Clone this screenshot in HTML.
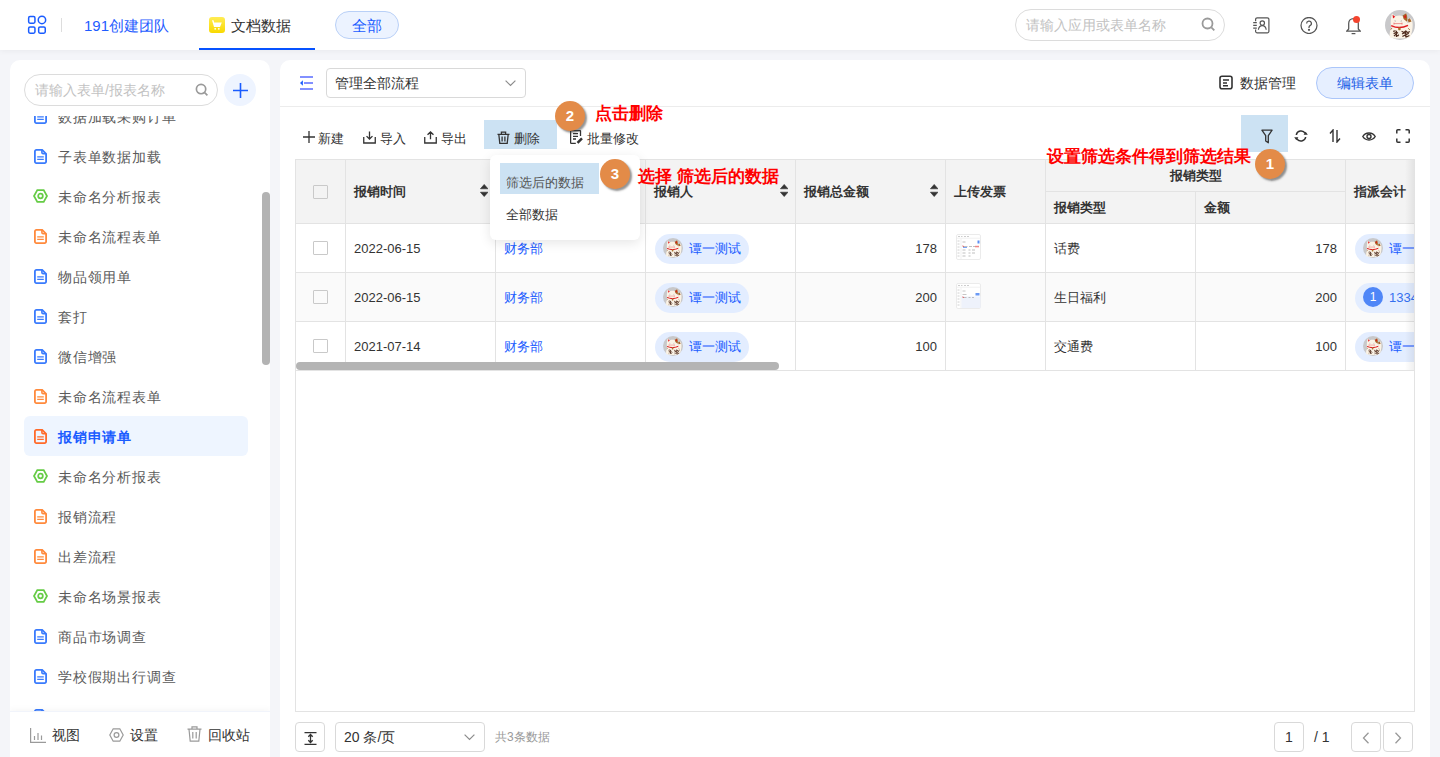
<!DOCTYPE html>
<html><head><meta charset="utf-8">
<style>
*{box-sizing:border-box;margin:0;padding:0}
html,body{width:1440px;height:757px;overflow:hidden}
body{position:relative;background:#f4f5f9;font-family:"Liberation Sans",sans-serif;color:#333;font-size:14px}
.a{position:absolute}
.t{position:absolute;white-space:nowrap;line-height:1}
svg{display:block;position:absolute}
/* header */
#hdr{position:absolute;left:0;top:0;width:1440px;height:50px;background:#fff;box-shadow:0 1px 6px rgba(0,0,0,.05)}
/* sidebar */
#side{position:absolute;left:10px;top:60px;width:260px;height:720px;background:#fff;border-radius:10px;overflow:hidden}
#main{position:absolute;left:280px;top:60px;width:1150px;height:720px;background:#fff;border-radius:10px}
.item{position:absolute;left:14px;width:224px;height:40px;border-radius:6px}
.item .t{left:34px;top:13.5px;font-size:14px;letter-spacing:.8px;color:#5a5a5a}
.item svg{left:9.5px;top:13px}
#list{position:absolute;left:0;top:56px;width:260px;height:596px;overflow:hidden}
.item.sel{background:#eef5ff}
.item.sel .t{color:#1a5cff;font-weight:bold}
.item .ih{left:8.5px;top:13px}
#sbot{position:absolute;left:0;top:651px;width:260px;height:60px;background:#fff;border-top:1px solid #f1f4fb;box-shadow:0 -2px 6px rgba(0,0,0,.035)}
.tb{top:132px;font-size:13px;color:#333}
.hl{height:1px;background:#e3e3e3}
.vl{width:1px;background:#e3e3e3}
.cb{width:14.5px;height:14px;border:1px solid #c9c9c9;border-radius:1px}
.th{font-size:13px;font-weight:bold;color:#333;margin-top:-1px}
.td{font-size:13px;color:#333}
.chip{height:30px;border-radius:15px;background:#e3edff}
.av{width:20px;height:20px;border-radius:50%;background:radial-gradient(circle at 50% 45%,#fff 0,#f5ece6 35%,#c9b6aa 60%,#bdbdbd 75%)}
.thumb{width:25px;height:26px;background:#f4f6fa;border:1px solid #eceef2}
.pbtn{width:30px;height:30px;border:1px solid #d9d9d9;border-radius:4px;background:#fff}
.num{width:30px;height:30px;border-radius:50%;background:#e38b48;color:#fff;font-size:15px;font-weight:bold;text-align:center;line-height:30px;box-shadow:2px 2px 2px rgba(60,60,60,.55)}
.ann{font-size:17px;font-weight:bold;color:#ff0000}
.avbig{width:30px;height:30px;border-radius:50%;background:radial-gradient(circle at 50% 45%,#fff 0,#f3e9e2 30%,#c7a995 55%,#bcbcbc 72%)}
</style></head><body>
<svg width="0" height="0" style="position:absolute">
<defs>
<symbol id="doc" viewBox="0 0 13 15"><g fill="none" stroke="currentColor"><path d="M2.4 0.9h5.8l3.9 3.9v7.8a1.5 1.5 0 0 1-1.5 1.5H2.4a1.5 1.5 0 0 1-1.5-1.5V2.4a1.5 1.5 0 0 1 1.5-1.5z" stroke-width="1.8"/><path d="M7.9 1v2.5a1.2 1.2 0 0 0 1.2 1.2h2.9" stroke-width="1.6"/><path d="M3.2 7.9h6.6M3.2 10.4h6.6" stroke-width="1.4"/></g></symbol>
<symbol id="hex" viewBox="0 0 15 14"><g fill="none" stroke="#66cc46" stroke-width="1.75"><path d="M4.3 1.1h6.4l3.3 5.9-3.3 5.9H4.3L1 7z"/><circle cx="7.5" cy="7" r="2.3"/></g></symbol>
<symbol id="cat" viewBox="0 0 30 30">
<circle cx="15" cy="15" r="15" fill="#c8c8ca"/>
<path d="M4.8 27.5c-.4-4 .2-7.5 1.6-10.2C5.4 14.5 5.5 9 7 3.6l3.4 2.6c2.6-.8 5.4-.8 7.6 0l3.3-2.8c1 3.2 1.3 6.4.8 9.5l1.5-.4c.2-2.3.8-3.8 2.2-4.2 1.6 1.8 2.2 5 1.8 8.6-.3 3.6-1.2 7.2-2.5 10.6-6.5 1.6-14 1.4-20.3-.1z" fill="#fbf3e6"/>
<path d="M17.6 5.6l3.6-2.3c1.2 2.6 1.4 5.4.8 8.4L18.6 9z" fill="#a5652a"/>
<path d="M22.6 9.8l2.3-1.6 1.6 3.4-2.8.8z" fill="#a5652a"/>
<path d="M7.6 4.8l2.6 2-2.2 1.8zM20.6 4.6l.5 3.4-2.4-.8z" fill="#e51016"/>
<path d="M9.5 10.8l1.4.4M15.6 11.2l1.4-.4" stroke="#9a9a9a" stroke-width=".7"/>
<path d="M8.8 13.6h8.4M9 12.6v2M17 12.6v2" stroke="#e86a6a" stroke-width=".7"/>
<path d="M6.2 15.6c4.8 2.4 11.6 2.4 16.8-.2" fill="none" stroke="#e01b20" stroke-width="1.5"/>
<rect x="13.2" y="17.4" width="2.4" height="2.8" rx=".6" fill="#a8702e"/>
<path d="M8.2 21.4l2.4-.6M8.6 23.6l3.2-1.4 1.2 1.2M9 26.2l1.6-1.8 2.2 1.6 1-1.4M11.4 20.8v6.2M16.6 21.2l2.2 1.2 2-1.4 2 1.6 2-1.2M17 24l2.6-1.2 1.8 1.8 2.4-1.4M17.4 26.6l2.4-1.4 2 1.6 2.6-1.2M20.8 20.6v7" stroke="#4e2a1c" stroke-width="1.15" fill="none"/>
<path d="M5.6 19.4l1.6-1.2M23.2 18.4l1.6 1.4" stroke="#a06a3a" stroke-width="1"/>
</symbol>
</defs></svg>

<div id="hdr">
  <svg style="left:27px;top:15px" width="21" height="21" viewBox="0 0 21 21" fill="none" stroke="#1a5cff" stroke-width="1.5">
    <rect x="1.65" y="1.55" width="6.3" height="6.7" rx="1.4"/><circle cx="14.95" cy="4.95" r="3.7"/>
    <rect x="1.65" y="11.95" width="6.3" height="6.3" rx="1.4"/><rect x="11.65" y="11.95" width="6.6" height="6.3" rx="1.4"/>
  </svg>
  <div class="a" style="left:61px;top:18px;width:1px;height:14px;background:#ddd"></div>
  <div class="t" style="left:84px;top:18px;font-size:15px;color:#1f5cff">191创建团队</div>
  <div class="a" style="left:209px;top:17px;width:16px;height:16px;border-radius:3px;background:linear-gradient(#ffec55,#f9d900)"></div>
  <svg style="left:209px;top:17px" width="16" height="16" viewBox="0 0 16 16" fill="#fff"><path d="M3 3.3h1.5l.7 2.2h7.6l-1.8 4.6H5z"/><circle cx="6.2" cy="11.8" r=".9"/><circle cx="9.8" cy="11.8" r=".9"/></svg>
  <div class="t" style="left:231px;top:18px;font-size:15px;color:#333">文档数据</div>
  <div class="a" style="left:199px;top:48px;width:116px;height:2px;background:#0652ff"></div>
  <div class="a" style="left:335px;top:11px;width:64px;height:28px;border-radius:14px;background:#ecf3ff;border:1px solid #b9d0f7"></div>
  <div class="t" style="left:352px;top:18px;font-size:15px;color:#1a5cff">全部</div>

  <div class="a" style="left:1015px;top:9px;width:210px;height:32px;border-radius:16px;border:1px solid #dcdcdc"></div>
  <div class="t" style="left:1026px;top:18px;font-size:14px;color:#c2c2c2">请输入应用或表单名称</div>
  <svg style="left:1201px;top:17px" width="15" height="15" viewBox="0 0 15 15" fill="none" stroke="#9a9a9a" stroke-width="1.8"><circle cx="6.5" cy="6.5" r="5"/><path d="M10.3 10.3l3 3"/></svg>
</div>

<div id="side">
  <div class="a" style="left:14px;top:14px;width:194px;height:32px;border-radius:16px;border:1px solid #dcdcdc"></div>
  <div class="t" style="left:25px;top:23px;font-size:14px;color:#c2c2c2">请输入表单/报表名称</div>
  <svg style="left:185px;top:23px" width="14" height="14" viewBox="0 0 15 15" fill="none" stroke="#9a9a9a" stroke-width="1.8"><circle cx="6.5" cy="6.5" r="5"/><path d="M10.3 10.3l3 3"/></svg>
  <div class="a" style="left:214px;top:14px;width:32px;height:32px;border-radius:50%;background:#eef4ff"></div>
  <svg style="left:223px;top:23px" width="15" height="15" viewBox="0 0 15 15" stroke="#1a5cff" stroke-width="1.6"><path d="M7.5 0v15M0 7.5h15"/></svg>
  <div id="list">
<div class="item" style="top:-20px"><svg class="id" width="13" height="15" style="color:#3a7bfd"><use href="#doc"/></svg><div class="t">数据加载采购订单</div></div>
<div class="item" style="top:20px"><svg class="id" width="13" height="15" style="color:#3a7bfd"><use href="#doc"/></svg><div class="t">子表单数据加载</div></div>
<div class="item" style="top:60px"><svg class="ih" width="15" height="14"><use href="#hex"/></svg><div class="t">未命名分析报表</div></div>
<div class="item" style="top:100px"><svg class="id" width="13" height="15" style="color:#ff8a3d"><use href="#doc"/></svg><div class="t">未命名流程表单</div></div>
<div class="item" style="top:140px"><svg class="id" width="13" height="15" style="color:#3a7bfd"><use href="#doc"/></svg><div class="t">物品领用单</div></div>
<div class="item" style="top:180px"><svg class="id" width="13" height="15" style="color:#3a7bfd"><use href="#doc"/></svg><div class="t">套打</div></div>
<div class="item" style="top:220px"><svg class="id" width="13" height="15" style="color:#3a7bfd"><use href="#doc"/></svg><div class="t">微信增强</div></div>
<div class="item" style="top:260px"><svg class="id" width="13" height="15" style="color:#ff8a3d"><use href="#doc"/></svg><div class="t">未命名流程表单</div></div>
<div class="item sel" style="top:300px"><svg class="id" width="13" height="15" style="color:#ff6a2a"><use href="#doc"/></svg><div class="t">报销申请单</div></div>
<div class="item" style="top:340px"><svg class="ih" width="15" height="14"><use href="#hex"/></svg><div class="t">未命名分析报表</div></div>
<div class="item" style="top:380px"><svg class="id" width="13" height="15" style="color:#ff8a3d"><use href="#doc"/></svg><div class="t">报销流程</div></div>
<div class="item" style="top:420px"><svg class="id" width="13" height="15" style="color:#ff8a3d"><use href="#doc"/></svg><div class="t">出差流程</div></div>
<div class="item" style="top:460px"><svg class="ih" width="15" height="14"><use href="#hex"/></svg><div class="t">未命名场景报表</div></div>
<div class="item" style="top:500px"><svg class="id" width="13" height="15" style="color:#3a7bfd"><use href="#doc"/></svg><div class="t">商品市场调查</div></div>
<div class="item" style="top:540px"><svg class="id" width="13" height="15" style="color:#3a7bfd"><use href="#doc"/></svg><div class="t">学校假期出行调查</div></div>
<div class="item" style="top:580px"><svg class="id" width="13" height="15" style="color:#3a7bfd"><use href="#doc"/></svg></div>
  </div>
  <div class="a" style="left:252px;top:132px;width:8px;height:173px;border-radius:4px;background:#b3b3b3"></div>
  <div id="sbot">
  </div>
</div>

<div id="main"></div>
<!-- main header -->
<svg style="left:300px;top:76px" width="14" height="15" viewBox="0 0 14 15"><path d="M0 1h13M4 7h9M0 13h13" stroke="#8290ff" stroke-width="1.9"/><path d="M0 7L2.9 4.3v5.4z" fill="#1a5cff"/></svg>
<div class="a" style="left:326px;top:68px;width:200px;height:30px;border:1px solid #d9d9d9;border-radius:4px"></div>
<div class="t" style="left:335px;top:76px;font-size:14px;color:#333">管理全部流程</div>
<svg style="left:505px;top:80px" width="11" height="7" viewBox="0 0 11 7"><path d="M0.6 0.6l4.9 4.9 4.9-4.9" fill="none" stroke="#8c8c8c" stroke-width="1.2"/></svg>
<svg style="left:1219px;top:75px" width="14" height="15" viewBox="0 0 14 15" fill="none" stroke="#333" stroke-width="1.6"><rect x="1" y="1.3" width="12" height="12.4" rx="2"/><path d="M4 5h6M4 8h4M4 10.8h5"/></svg>
<div class="t" style="left:1240px;top:76px;font-size:14px;color:#333">数据管理</div>
<div class="a" style="left:1316px;top:67px;width:98px;height:32px;border-radius:16px;background:#e6efff;border:1px solid #abc6fa"></div>
<div class="t" style="left:1337px;top:76px;font-size:14px;color:#2160e6">编辑表单</div>
<div class="a" style="left:280px;top:106px;width:1150px;height:1px;background:#ececec"></div>

<!-- toolbar -->
<svg style="left:303px;top:131px" width="12" height="12" viewBox="0 0 12 12" stroke="#333" stroke-width="1.3"><path d="M6 0v12M0 6h12"/></svg>
<div class="t tb" style="left:318px">新建</div>
<svg style="left:363px;top:130.5px" width="13" height="13" viewBox="0 0 14 14" fill="none" stroke="#333" stroke-width="1.4"><path d="M7 0.5v8M3.8 5.5L7 8.6l3.2-3.1M0.8 6.5v6.4h12.4V6.5"/></svg>
<div class="t tb" style="left:380px">导入</div>
<svg style="left:424px;top:130.5px" width="13" height="13" viewBox="0 0 14 14" fill="none" stroke="#333" stroke-width="1.4"><path d="M7 9V1M3.8 4.1L7 1l3.2 3.1M0.8 6.5v6.4h12.4V6.5"/></svg>
<div class="t tb" style="left:441px">导出</div>
<div class="a" style="left:484px;top:120px;width:73px;height:29px;background:#cce2f3"></div>
<svg style="left:497px;top:131px" width="13" height="13" viewBox="0 0 13 13" fill="none" stroke="#333" stroke-width="1.3"><path d="M0.5 3.3h12M4.4 3.3V1.2h4.2v2.1M1.8 3.3l1 9h7.4l1-9M5.1 5.5v5M7.9 5.5v5"/></svg>
<div class="t tb" style="left:514px">删除</div>
<svg style="left:570px;top:130px" width="13" height="14" viewBox="0 0 13 14" fill="none" stroke="#333" stroke-width="1.3"><path d="M10.5 6V1.2A.7.7 0 0 0 9.8.6H1.3a.7.7 0 0 0-.7.6v11.6a.7.7 0 0 0 .7.6h4.5M3 3.6h5M3 6.3h5M3 9h3"/><path d="M7.5 12.8l4.5-4.5" stroke-width="2.4"/></svg>
<div class="t tb" style="left:587px">批量修改</div>

<div class="a" style="left:1241px;top:115px;width:47px;height:37px;background:#cce2f3"></div>
<svg style="left:1261px;top:129px" width="12" height="15" viewBox="0 0 12 15" fill="none" stroke="#333" stroke-width="1.3" stroke-linejoin="round"><path d="M0.9 1.2h10.2L7.3 6.6v7.2L4.7 11.9V6.6z"/></svg>
<svg style="left:1294px;top:129px" width="14" height="14" viewBox="0 0 14 14" fill="none" stroke="#333" stroke-width="1.5"><path d="M2.3 6A4.8 4.8 0 0 1 11.2 4.4M11.7 8A4.8 4.8 0 0 1 2.8 9.6"/><path d="M9.6 5.8h4.2L11.7 2.8zM0.2 8.2h4.2L2.3 11.2z" fill="#333" stroke="none"/></svg>
<svg style="left:1329px;top:129px" width="12" height="14" viewBox="0 0 12 14" fill="none" stroke="#333" stroke-width="1.4"><path d="M4 13V1L1 4.5M8 1v12l3-3.5"/></svg>
<svg style="left:1362px;top:131px" width="14" height="11" viewBox="0 0 14 11" fill="none" stroke="#333" stroke-width="1.4"><path d="M0.8 5.5C3.4 0.9 10.6 0.9 13.2 5.5 10.6 10.1 3.4 10.1 0.8 5.5z"/><circle cx="7" cy="5.5" r="2"/></svg>
<svg style="left:1396px;top:129px" width="14" height="14" viewBox="0 0 14 14" fill="none" stroke="#333" stroke-width="1.5"><path d="M0.8 4.5V1.8a1 1 0 0 1 1-1h2.7M9.5 0.8h2.7a1 1 0 0 1 1 1v2.7M13.2 9.5v2.7a1 1 0 0 1-1 1H9.5M4.5 13.2H1.8a1 1 0 0 1-1-1V9.5"/></svg>

<div class="a" style="left:0;top:0;width:1440px;height:757px;clip-path:inset(0 25px 0 0)">
<div class="a" style="left:295px;top:159px;width:1120px;height:553px;border:1px solid #e3e3e3;border-right:none"></div>
<div class="a" style="left:296px;top:160px;width:1119px;height:63px;background:#f3f3f3"></div>
<div class="a" style="left:296px;top:273px;width:1119px;height:48px;background:#fafafa"></div>
<div class="a hl" style="left:295px;top:223px;width:1120px"></div>
<div class="a hl" style="left:295px;top:272px;width:1120px"></div>
<div class="a hl" style="left:295px;top:321px;width:1120px"></div>
<div class="a hl" style="left:295px;top:370px;width:1120px"></div>
<div class="a hl" style="left:1045px;top:191px;width:300px"></div>
<div class="a vl" style="left:345px;top:159px;height:211px"></div>
<div class="a vl" style="left:495px;top:159px;height:211px"></div>
<div class="a vl" style="left:645px;top:159px;height:211px"></div>
<div class="a vl" style="left:795px;top:159px;height:211px"></div>
<div class="a vl" style="left:945px;top:159px;height:211px"></div>
<div class="a vl" style="left:1045px;top:159px;height:211px"></div>
<div class="a vl" style="left:1345px;top:159px;height:211px"></div>
<div class="a vl" style="left:1195px;top:191px;height:179px"></div>
<div class="a cb" style="left:313px;top:185px"></div>
<div class="a cb" style="left:313px;top:241px"></div>
<div class="a cb" style="left:313px;top:290px"></div>
<div class="a cb" style="left:313px;top:339px"></div>
<div class="t th" style="left:354px;top:186px">报销时间</div>
<div class="t th" style="left:654px;top:186px">报销人</div>
<div class="t th" style="left:804px;top:186px">报销总金额</div>
<div class="t th" style="left:954px;top:186px">上传发票</div>
<div class="t th" style="left:1170px;top:170px">报销类型</div>
<div class="t th" style="left:1054px;top:202px">报销类型</div>
<div class="t th" style="left:1204px;top:202px">金额</div>
<div class="t th" style="left:1354px;top:186px">指派会计</div>
<svg style="left:479.8px;top:184px" width="8.4" height="13" viewBox="0 0 8.4 13" fill="#333" stroke="#333" stroke-width=".6" stroke-linejoin="round"><path d="M4.2 0.4L8 4.8H0.4zM4.2 12.6L0.4 8.2H8z"/></svg>
<svg style="left:779.8px;top:184px" width="8.4" height="13" viewBox="0 0 8.4 13" fill="#333" stroke="#333" stroke-width=".6" stroke-linejoin="round"><path d="M4.2 0.4L8 4.8H0.4zM4.2 12.6L0.4 8.2H8z"/></svg>
<svg style="left:929.8px;top:184px" width="8.4" height="13" viewBox="0 0 8.4 13" fill="#333" stroke="#333" stroke-width=".6" stroke-linejoin="round"><path d="M4.2 0.4L8 4.8H0.4zM4.2 12.6L0.4 8.2H8z"/></svg>
<div class="t td" style="left:354px;top:241.5px">2022-06-15</div>
<div class="t td" style="left:504px;top:241.5px;color:#1a5cff">财务部</div>
<div class="a chip" style="left:655px;top:234px;width:94px"></div>
<svg style="left:663px;top:238px" width="20" height="20"><use href="#cat"/></svg>
<div class="t td" style="left:689px;top:242px;color:#1a5cff">谭一测试</div>
<div class="t td" style="left:937px;top:241.5px;transform:translateX(-100%)">178</div>
<svg style="left:956px;top:234px" width="25" height="26" viewBox="0 0 25 26"><rect x=".5" y=".5" width="24" height="25" rx="1.5" fill="#fff" stroke="#ebebeb"/><path d="M2 2.5h2M5 2.5h1.5M8 2.5h2M11 2.5h2" stroke="#c8c8c8" stroke-width=".9"/><path d="M.8 4.2h23.4" stroke="#eee" stroke-width=".8"/><path d="M5 4.5v20.5" stroke="#eee" stroke-width=".8"/><path d="M1.5 7h2M1.5 10h2M1.5 13h2M1.5 16h2M1.5 19h2M1.5 22h2" stroke="#c4c4c4" stroke-width=".8"/><path d="M6.5 8h3M6.5 12.5h5M13 12.5h3M17 12.5h3M6.5 16h3M12.5 16h2M16 16h3M6.5 19h3M12.5 19h2M16 19h3M6.5 22h3M12.5 22h2" stroke="#b8b8b8" stroke-width=".9"/><rect x="21.5" y="6.5" width="2" height="3" fill="#5b8ef5"/><path d="M6.8 11.5l1 1.6" stroke="#e55" stroke-width=".9"/><rect x="19" y="11.8" width="4" height="1.5" fill="#e88"/><path d="M7 13.5h4" stroke="#5b8ef5" stroke-width=".8"/></svg>
<div class="t td" style="left:1054px;top:241.5px">话费</div>
<div class="t td" style="left:1337px;top:241.5px;transform:translateX(-100%)">178</div>
<div class="a chip" style="left:1355px;top:234px;width:80px"></div>
<svg style="left:1363px;top:238px" width="20" height="20"><use href="#cat"/></svg>
<div class="t td" style="left:1389px;top:242px;color:#1a5cff">谭一测试</div>
<div class="t td" style="left:354px;top:290.5px">2022-06-15</div>
<div class="t td" style="left:504px;top:290.5px;color:#1a5cff">财务部</div>
<div class="a chip" style="left:655px;top:283px;width:94px"></div>
<svg style="left:663px;top:287px" width="20" height="20"><use href="#cat"/></svg>
<div class="t td" style="left:689px;top:291px;color:#1a5cff">谭一测试</div>
<div class="t td" style="left:937px;top:290.5px;transform:translateX(-100%)">200</div>
<svg style="left:956px;top:283px" width="25" height="26" viewBox="0 0 25 26"><rect x=".5" y=".5" width="24" height="25" rx="1.5" fill="#fff" stroke="#ebebeb"/><path d="M2 2.5h2M5 2.5h1.5M8 2.5h2M11 2.5h2" stroke="#c8c8c8" stroke-width=".9"/><path d="M.8 4.2h23.4" stroke="#eee" stroke-width=".8"/><path d="M5 4.5v20.5" stroke="#eee" stroke-width=".8"/><path d="M1.5 7h2M1.5 10h2M1.5 13h2M1.5 16h2M1.5 19h2M1.5 22h2" stroke="#c4c4c4" stroke-width=".8"/><path d="M6.5 8h3M6.5 11.5h4" stroke="#c0c0c0" stroke-width=".9"/><rect x="19.5" y="10" width="4" height="2.5" fill="#6b9af5"/><rect x="5.5" y="13.5" width="19" height="11.5" fill="#eef2fb"/><path d="M6.5 14.5h4M12.5 14.5h2M16 14.5h2" stroke="#b8b8b8" stroke-width=".9"/><path d="M6.8 13.5l.8 1.5" stroke="#e55" stroke-width=".9"/></svg>
<div class="t td" style="left:1054px;top:290.5px">生日福利</div>
<div class="t td" style="left:1337px;top:290.5px;transform:translateX(-100%)">200</div>
<div class="a chip" style="left:1355px;top:283px;width:80px"></div>
<div class="a" style="left:1363px;top:287px;width:20px;height:20px;border-radius:50%;background:#4f86f7;color:#fff;font-size:12px;line-height:20px;text-align:center">1</div>
<div class="t td" style="left:1389px;top:291px;color:#3570f0">13345678</div>
<div class="t td" style="left:354px;top:339.5px">2021-07-14</div>
<div class="t td" style="left:504px;top:339.5px;color:#1a5cff">财务部</div>
<div class="a chip" style="left:655px;top:332px;width:94px"></div>
<svg style="left:663px;top:336px" width="20" height="20"><use href="#cat"/></svg>
<div class="t td" style="left:689px;top:340px;color:#1a5cff">谭一测试</div>
<div class="t td" style="left:937px;top:339.5px;transform:translateX(-100%)">100</div>
<div class="t td" style="left:1054px;top:339.5px">交通费</div>
<div class="t td" style="left:1337px;top:339.5px;transform:translateX(-100%)">100</div>
<div class="a chip" style="left:1355px;top:332px;width:80px"></div>
<svg style="left:1363px;top:336px" width="20" height="20"><use href="#cat"/></svg>
<div class="t td" style="left:1389px;top:340px;color:#1a5cff">谭一测试</div>
<div class="a" style="left:1405px;top:160px;width:10px;height:210px;background:linear-gradient(90deg,rgba(0,0,0,0),rgba(0,0,0,.07))"></div>
<div class="a" style="left:296px;top:362px;width:483px;height:8px;border-radius:4px;background:#b4b4b4"></div>
</div>
<div class="a vl" style="left:1414px;top:159px;height:553px"></div>



<!-- header right icons -->
<svg style="left:1253px;top:17px" width="18" height="17" viewBox="0 0 18 17" fill="none" stroke="#555" stroke-width="1.2"><path d="M2.6 4.2V2.4A1.6 1.6 0 0 1 4.2 0.8H14.3A1.6 1.6 0 0 1 15.9 2.4V14.3A1.6 1.6 0 0 1 14.3 15.9H4.2A1.6 1.6 0 0 1 2.6 14.3V12.6"/><path d="M0.2 5.6h3.6M0.2 8.3h3.6M0.2 11.1h3.6"/><circle cx="9.3" cy="6.1" r="2.2"/><path d="M5.4 12.8c0.3-2.8 1.8-4.2 3.9-4.2s3.6 1.4 3.9 4.2"/></svg>
<svg style="left:1300px;top:17px" width="18" height="17" viewBox="0 0 18 17" fill="none" stroke="#555" stroke-width="1.25"><circle cx="9" cy="8.5" r="8"/><path d="M6.6 6.4a2.4 2.4 0 1 1 3.4 2.2c-0.7 0.4-1 0.8-1 1.6v0.8"/><circle cx="9" cy="12.8" r="0.5" fill="#555"/></svg>
<svg style="left:1346px;top:16px" width="15" height="19" viewBox="0 0 15 19" fill="none" stroke="#555" stroke-width="1.25"><path d="M7.5 2.5c-3 0-4.8 2.3-4.8 5v5.5L0.8 15h13.4l-1.9-2V7.5c0-2.7-1.8-5-4.8-5z"/><path d="M5.6 17.6h3.8"/></svg>
<div class="a" style="left:1353px;top:16px;width:7px;height:7px;border-radius:50%;background:#f4442e"></div>
<svg style="left:1385px;top:10px" width="30" height="30"><use href="#cat"/></svg>

<!-- sidebar bottom -->
<svg style="left:30px;top:728px" width="16" height="15" viewBox="0 0 16 15" fill="none" stroke="#9a9a9a" stroke-width="1.2"><path d="M0.6 0v14.4H16M4.5 12V8M8 12V5M11.5 12V7.5"/></svg>
<div class="t" style="left:52px;top:728px;font-size:14px;color:#333">视图</div>
<svg style="left:109px;top:728px" width="15" height="14" viewBox="0 0 15 14" fill="none" stroke="#9a9a9a" stroke-width="1.2"><path d="M4.2 0.8h6.6l3.4 6.2-3.4 6.2H4.2L0.8 7z"/><circle cx="7.5" cy="7" r="2.4"/></svg>
<div class="t" style="left:130px;top:728px;font-size:14px;color:#333">设置</div>
<svg style="left:187px;top:726px" width="15" height="16" viewBox="0 0 15 16" fill="none" stroke="#9a9a9a" stroke-width="1.2"><path d="M0.5 3.2h14M5 3.2V0.8h5v2.4M2 3.2l1.2 12h8.6l1.2-12M5.8 6v6.5M9.2 6v6.5"/></svg>
<div class="t" style="left:208px;top:728px;font-size:14px;color:#333">回收站</div>

<!-- pagination -->
<div class="a pbtn" style="left:295px;top:722px"></div>
<svg style="left:304px;top:732px" width="13" height="13" viewBox="0 0 13 13" fill="none" stroke="#333" stroke-width="1.3"><path d="M0.5 0.6h12M0.5 12.4h12M6.5 2.5v8M4.3 4.7l2.2-2.2 2.2 2.2M4.3 8.3l2.2 2.2 2.2-2.2"/></svg>
<div class="a" style="left:335px;top:722px;width:150px;height:30px;border:1px solid #d9d9d9;border-radius:4px"></div>
<div class="t" style="left:344px;top:730px;font-size:14px;color:#333">20 条/页</div>
<svg style="left:464px;top:734px" width="11" height="7" viewBox="0 0 11 7"><path d="M0.6 0.6l4.9 4.9 4.9-4.9" fill="none" stroke="#8c8c8c" stroke-width="1.2"/></svg>
<div class="t" style="left:495px;top:731px;font-size:12px;color:#999">共3条数据</div>
<div class="a pbtn" style="left:1274px;top:722px;text-align:center;line-height:28px;font-size:14px;color:#333">1</div>
<div class="t" style="left:1314px;top:730px;font-size:14px;color:#333">/ 1</div>
<div class="a pbtn" style="left:1351px;top:722px"></div>
<div class="a pbtn" style="left:1383px;top:722px"></div>
<svg style="left:1362px;top:732px" width="8" height="12" viewBox="0 0 8 12"><path d="M6.5 0.8L1.5 6l5 5.2" fill="none" stroke="#999" stroke-width="1.3"/></svg>
<svg style="left:1394px;top:732px" width="8" height="12" viewBox="0 0 8 12"><path d="M1.5 0.8L6.5 6l-5 5.2" fill="none" stroke="#999" stroke-width="1.3"/></svg>

<!-- dropdown -->
<div class="a" style="left:490px;top:155px;width:150px;height:85px;background:#fff;border-radius:6px;box-shadow:0 3px 12px rgba(0,0,0,.10)"></div>
<div class="a" style="left:500px;top:163px;width:99px;height:31px;background:#cce2f3"></div>
<div class="t" style="left:506px;top:176px;font-size:13px;color:#555">筛选后的数据</div>
<div class="t" style="left:506px;top:208px;font-size:13px;color:#333">全部数据</div>

<!-- annotations -->
<div class="a num" style="left:555px;top:101px">2</div>
<div class="t ann" style="left:595px;top:105px">点击删除</div>
<div class="a num" style="left:600px;top:159px">3</div>
<div class="t ann" style="left:638px;top:168px">选择 筛选后的数据</div>
<div class="a num" style="left:1255px;top:149px">1</div>
<div class="t ann" style="left:1047px;top:148px">设置筛选条件得到筛选结果</div>
</body></html>
